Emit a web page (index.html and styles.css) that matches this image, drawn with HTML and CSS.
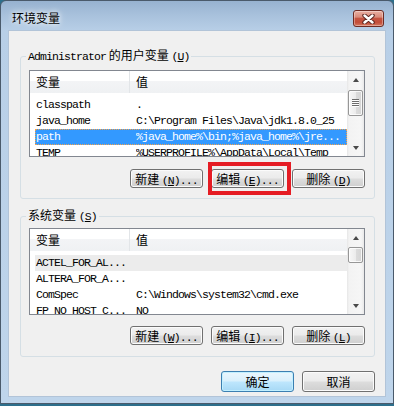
FILE: index.html
```html
<!DOCTYPE html>
<html lang="zh-CN">
<head>
<meta charset="utf-8">
<title>环境变量</title>
<link rel="stylesheet" href="styles.css">
</head>
<body>
<div class="window">
  <div class="titlebar">
    <span class="title">环境变量</span>
    <button class="close" aria-label="关闭">
      <svg width="13" height="10" viewBox="0 0 13 10">
        <path d="M2.5 1.5 L10.5 8.5 M10.5 1.5 L2.5 8.5" stroke="#5b2620" stroke-width="4.4" stroke-linecap="round" fill="none"/>
        <path d="M2.5 1.5 L10.5 8.5 M10.5 1.5 L2.5 8.5" stroke="#ffffff" stroke-width="2.4" stroke-linecap="round" fill="none"/>
      </svg>
    </button>
  </div>
  <div class="client">
    <fieldset class="group group-user">
      <legend><span class="mono">Administrator</span> 的用户变量 <span class="key">(<u>U</u>)</span></legend>
      <div class="group-body">
        <div class="listview">
          <div class="lv-body">
            <div class="lv-header"><div class="hcell c1">变量</div><div class="hcell c2">值</div></div>
            <div class="lv-rows">
              <div class="row"><span class="cell c1">classpath</span><span class="cell c2">.</span></div>
              <div class="row"><span class="cell c1">java_home</span><span class="cell c2">C:\Program Files\Java\jdk1.8.0_25</span></div>
              <div class="row selected"><span class="cell c1">path</span><span class="cell c2">%java_home%\bin;%java_home%\jre...</span></div>
              <div class="row"><span class="cell c1">TEMP</span><span class="cell c2">%USERPROFILE%\AppData\Local\Temp</span></div>
            </div>
          </div>
          <div class="vscroll">
            <div class="sb-btn"><span class="tri-up"></span></div>
            <div class="sb-track"><div class="thumb thumb-big"><span class="grip"></span></div></div>
            <div class="sb-btn"><span class="tri-down"></span></div>
          </div>
        </div>
        <div class="btnrow">
          <button class="btn">新建 <span class="key">(<u>N</u>)...</span></button>
          <button class="btn marked">编辑 <span class="key">(<u>E</u>)...</span><span class="redbox"></span></button>
          <button class="btn">删除 <span class="key">(<u>D</u>)</span></button>
        </div>
      </div>
    </fieldset>

    <fieldset class="group group-sys">
      <legend>系统变量 <span class="key">(<u>S</u>)</span></legend>
      <div class="group-body">
        <div class="listview">
          <div class="lv-body">
            <div class="lv-header"><div class="hcell c1">变量</div><div class="hcell c2">值</div></div>
            <div class="lv-rows">
              <div class="row hover"><span class="cell c1">ACTEL_FOR_AL...</span><span class="cell c2"></span></div>
              <div class="row"><span class="cell c1">ALTERA_FOR_A...</span><span class="cell c2"></span></div>
              <div class="row"><span class="cell c1">ComSpec</span><span class="cell c2">C:\Windows\system32\cmd.exe</span></div>
              <div class="row"><span class="cell c1">FP_NO_HOST_C...</span><span class="cell c2">NO</span></div>
            </div>
          </div>
          <div class="vscroll">
            <div class="sb-btn"><span class="tri-up"></span></div>
            <div class="sb-track"><div class="thumb thumb-small"></div></div>
            <div class="sb-btn"><span class="tri-down"></span></div>
          </div>
        </div>
        <div class="btnrow">
          <button class="btn">新建 <span class="key">(<u>W</u>)...</span></button>
          <button class="btn">编辑 <span class="key">(<u>I</u>)...</span></button>
          <button class="btn">删除 <span class="key">(<u>L</u>)</span></button>
        </div>
      </div>
    </fieldset>

    <div class="dlg-buttons">
      <button class="btn btn-big default">确定</button>
      <button class="btn btn-big">取消</button>
    </div>
  </div>
</div>
</body>
</html>
```

FILE: styles.css
```css
* { box-sizing: border-box; }
html, body { margin: 0; padding: 0; }
body {
  width: 394px;
  height: 406px;
  overflow: hidden;
  background: #2d6f8c;
  font-family: "Noto Sans CJK SC", "Noto Sans", sans-serif;
  font-size: 12px;
  color: #000;
}

.window {
  width: 394px;
  height: 404px;
  border: 1px solid #4a5a6b;
  border-radius: 6px 6px 0 0;
  background: linear-gradient(to bottom, #97b2d0 0px, #a8c1dc 14px, #b8cfe7 30px, #bfd5eb 100%);
  display: flex;
  flex-direction: column;
}

.titlebar {
  height: 29px;
  flex: none;
  display: flex;
  justify-content: space-between;
  align-items: flex-start;
  padding: 0 9px 0 11px;
}
.title {
  margin-top: 10px;
  line-height: 14px;
  font-size: 12px;
  text-shadow: 0 0 5px #fff, 0 0 9px rgba(255,255,255,0.85);
}
.close {
  margin-top: 9px;
  width: 31px;
  height: 17px;
  padding: 0;
  border: 1px solid #6d2b23;
  border-radius: 3px;
  background: linear-gradient(to bottom, #eab0a3 0%, #d98b7b 40%, #c55441 50%, #c24d39 75%, #d37860 100%);
  box-shadow: inset 0 0 0 1px rgba(255,255,255,0.35);
  display: flex;
  align-items: center;
  justify-content: center;
}
.close svg { display: block; }

.client {
  flex: none;
  margin: 0 7px;
  height: 367px;
  background: #f0f0f0;
  border: 1px solid #b2c4d8;
  padding: 0 10px 0 11px;
  display: flex;
  flex-direction: column;
}

.group {
  margin: 0;
  padding: 0;
  border: 1px solid #d5dfe5;
  border-radius: 3px;
  min-width: 0;
}
.group-user { margin-top: 17px; }
.group-sys { margin-top: 9px; }
.group legend {
  margin-left: 5px;
  padding: 0 2px;
  line-height: 14px;
  font-size: 12px;
}
.mono, .key {
  font-family: "Liberation Mono", monospace;
  font-size: 11.5px;
  letter-spacing: -0.9px;
}

.group-body { padding: 0 9px 0 8px; }
.group-user .group-body { padding-top: 6px; padding-bottom: 10px; }
.group-sys .group-body { padding-top: 4px; padding-bottom: 11px; }

.listview {
  height: 87px;
  border: 1px solid #828790;
  background: #fff;
  display: flex;
}
.lv-body { flex: 1; min-width: 0; overflow: hidden; }
.lv-header {
  height: 22px;
  display: flex;
  background: linear-gradient(to bottom, #ffffff 0%, #ffffff 45%, #f3f4f6 46%, #eff1f3 100%);
}
.hcell { line-height: 22px; padding-left: 6px; }
.hcell.c1 { width: 100px; flex: none; border-right: 1px solid #e2e5e8; }
.lv-rows { padding-top: 4px; }
.row {
  display: flex;
  margin-left: 5px;
  height: 16px;
  line-height: 16px;
  font-family: "Liberation Mono", monospace;
  font-size: 11.5px;
  letter-spacing: -0.9px;
  white-space: nowrap;
}
.cell { overflow: hidden; }
.row .c1 { width: 101px; flex: none; padding-left: 1px; }
.row .c2 { flex: 1; }
.row.selected {
  background: #3399ff;
  color: #fff;
  outline: 1px dotted #f3a24c;
  outline-offset: -1px;
}
.row.hover { background: #ececec; }

.vscroll {
  width: 17px;
  flex: none;
  display: flex;
  flex-direction: column;
  background: linear-gradient(to right, #e6e6e6 0px, #f3f3f3 2px, #f6f6f6 14px, #e9e9e9 17px);
}
.sb-btn {
  height: 17px;
  flex: none;
  display: flex;
  align-items: center;
  justify-content: center;
}
.tri-up, .tri-down {
  width: 0;
  height: 0;
  border-left: 3.5px solid transparent;
  border-right: 3.5px solid transparent;
}
.tri-up { border-bottom: 4px solid #4a4a4a; }
.tri-down { border-top: 4px solid #4a4a4a; }
.sb-track { flex: 1; }
.thumb {
  margin: 0 1px;
  border: 1px solid #979797;
  border-radius: 2px;
  background: linear-gradient(to right, #f7f7f7 0%, #ececec 50%, #dcdcdc 51%, #d4d4d4 100%);
  box-shadow: inset 0 0 0 1px rgba(255,255,255,0.8);
  display: flex;
  align-items: center;
  justify-content: center;
}
.thumb-big { margin-top: 2px; height: 26px; }
.thumb-small { margin-top: 1px; height: 16px; }
.grip {
  width: 7px;
  height: 8px;
  background: repeating-linear-gradient(to bottom, #6c6c6c 0px, #6c6c6c 1px, #fdfdfd 1px, #fdfdfd 2px);
}

.btnrow {
  display: flex;
  justify-content: flex-end;
  gap: 8px;
}
.group-user .btnrow { margin-top: 12px; }
.group-sys .btnrow { margin-top: 11px; }

.btn {
  position: relative;
  width: 73px;
  height: 19px;
  padding: 0;
  border: 1px solid #707070;
  border-radius: 3px;
  background: linear-gradient(to bottom, #f2f2f2 0%, #ebebeb 48%, #dddddd 52%, #cfcfcf 100%);
  box-shadow: inset 0 0 0 1px #fbfbfb;
  font-family: "Noto Sans CJK SC", sans-serif;
  font-size: 12px;
  line-height: 17px;
  color: #000;
  white-space: nowrap;
}
.redbox {
  position: absolute;
  left: -4px;
  top: -8px;
  width: 83px;
  height: 33px;
  border: 4px solid #e51c24;
  pointer-events: none;
}

.dlg-buttons {
  margin-top: 14px;
  display: flex;
  justify-content: flex-end;
  gap: 8px;
}
.btn-big { height: 21px; line-height: 19px; }
.btn.default {
  border-color: #3c7fb1;
  background: linear-gradient(to bottom, #eaf6fd 0%, #d9f0fc 48%, #bee6fd 52%, #a7d9f5 100%);
  box-shadow: inset 0 0 0 1px #c2f0ff;
}
```
